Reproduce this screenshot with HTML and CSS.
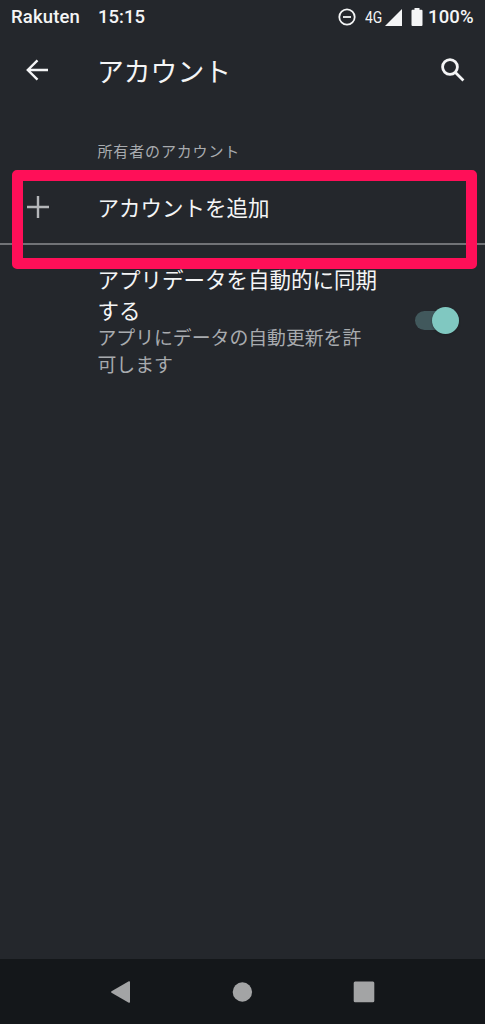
FILE: index.html
```
<!DOCTYPE html>
<html lang="ja">
<head>
<meta charset="utf-8">
<title>アカウント</title>
<link rel="stylesheet" href="styles.css">
</head>
<body>
<div class="screen">
  <div class="status">
    <span class="carrier">Rakuten</span>
    <span class="clock">15:15</span>
    <svg class="dnd" width="18" height="18" viewBox="0 0 18 18"><circle cx="9" cy="9" r="7.7"/><path d="M5 9h8"/></svg>
    <span class="network">4G</span>
    <svg class="signal" width="17" height="17" viewBox="0 0 17 17"><path d="M17 0v17H0z"/></svg>
    <svg class="battery" width="12" height="18" viewBox="0 0 12 18"><path d="M3.5 0h5v1.8H10.5Q11.5 1.8 11.5 2.8V17Q11.5 18 10.5 18H1.5Q.5 18 .5 17V2.8Q.5 1.8 1.5 1.8H3.5z"/></svg>
    <span class="percent">100%</span>
  </div>
  <header class="toolbar">
    <svg class="back" width="22" height="22" viewBox="0 0 22 22"><path d="M22 11H2M11.5 1.3 1.8 11l9.7 9.7"/></svg>
    <h1 class="title">アカウント</h1>
    <svg class="search" width="24" height="24" viewBox="0 0 24 24"><circle cx="9" cy="9" r="7.4"/><path d="m14.4 14.4 8 8"/></svg>
  </header>
  <main class="content">
    <h2 class="label">所有者のアカウント</h2>
    <section class="add">
      <svg class="plus" width="22" height="22" viewBox="0 0 22 22"><path d="M11 0v22M0 11h22"/></svg>
      <span class="name">アカウントを追加</span>
      <div class="highlight"></div>
    </section>
    <section class="sync">
      <div class="copy">
        <div class="name">アプリデータを自動的に同期<br>する</div>
        <div class="summary">アプリにデータの自動更新を許<br>可します</div>
      </div>
      <div class="switch"><div class="thumb"></div></div>
    </section>
  </main>
  <nav class="navbar">
    <svg width="22" height="24" viewBox="0 0 22 24"><path d="M1.5 11.2Q.5 12 1.5 12.8L18.8 22.7Q20 23 20 22V2Q20 1 18.8 1.3z"/></svg>
    <svg width="22" height="24" viewBox="0 0 22 24"><circle cx="11.4" cy="12" r="9.7"/></svg>
    <svg width="22" height="24" viewBox="0 0 22 24"><rect x=".7" y="1.6" width="20.6" height="20.6" rx="1.5"/></svg>
  </nav>
</div>
</body>
</html>
```
FILE: styles.css
```
* { box-sizing: border-box; }
body { margin: 0; background: #24272c; }
.screen {
  display: flex;
  flex-direction: column;
  height: 1024px;
  width: 485px;
  overflow: hidden;
  color: #f4f5f6;
  font-family: Roboto, "Noto Sans CJK JP", sans-serif;
}
svg { display: block; flex: none; }
.status {
  display: flex;
  align-items: center;
  height: 34px;
  padding-left: 11px;
  font-size: 18.5px;
  font-weight: 500;
  white-space: nowrap;
}
.carrier { width: 87px; letter-spacing: .15px; }
.clock { width: 239.5px; }
.dnd { fill: none; stroke: #f4f5f6; stroke-width: 1.8; }
.network { width: 17px; margin-left: 9px; font-size: 16px; font-weight: 400; transform: scaleX(.87); transform-origin: left; }
.signal { margin-left: 3.5px; fill: #f4f5f6; }
.battery { margin-left: 8.5px; fill: #f4f5f6; }
.percent { margin-left: 5.5px; letter-spacing: .15px; }
.toolbar {
  display: flex;
  align-items: center;
  height: 72px;
  padding: 0 20.5px 0 26px;
}
.back { fill: none; stroke: #f4f5f6; stroke-width: 2.4; }
.title {
  flex: 1;
  margin: 5px 0 0 49px;
  font-size: 26.8px;
  font-weight: 400;
  line-height: 40px;
}
.search { fill: none; stroke: #f4f5f6; stroke-width: 2.8; }
.content { flex: 1; }
.label {
  margin: 34px 0 0 97.5px;
  height: 23px;
  color: #a8abaf;
  font-size: 15px;
  font-weight: 400;
  line-height: 24px;
  letter-spacing: .85px;
}
.add {
  position: relative;
  display: flex;
  height: 82px;
  padding: 33px 0 0 26.5px;
  border-bottom: 2px solid #717377;
}
.plus { fill: none; stroke: #b4b6b9; stroke-width: 2.4; }
.name { font-size: 21.5px; line-height: 31px; white-space: nowrap; }
.add .name { margin: -3px 0 0 49px; }
.highlight {
  position: absolute;
  top: 7px;
  left: 12px;
  width: 465px;
  height: 99px;
  border: 11px solid #ff0f58;
  border-radius: 5px;
}
.sync {
  display: flex;
  align-items: center;
  justify-content: space-between;
  padding: 20px 26px 0 97.5px;
}
.summary { color: #a8abaf; font-size: 18.85px; line-height: 26.5px; white-space: nowrap; margin-top: -1px; }
.switch {
  display: flex;
  align-items: center;
  justify-content: flex-end;
  width: 44px;
  height: 19px;
  margin-bottom: 3px;
  border-radius: 10px;
  background: #41585c;
}
.thumb { width: 27px; height: 27px; flex: none; border-radius: 50%; background: #80c8c1; box-shadow: 0 1px 2px #15191c80; }
.navbar {
  display: flex;
  align-items: center;
  justify-content: space-between;
  height: 65px;
  padding: 0 110px 0 109.5px;
  background: #14171a;
  fill: #a3a4a5;
}
```
